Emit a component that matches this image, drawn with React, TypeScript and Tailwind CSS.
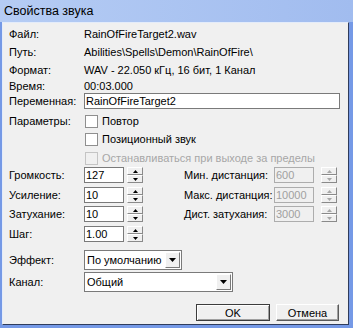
function Spin({ disabled }: { disabled?: boolean }) {
  const c = disabled ? "#a8a8a8" : "#000";
  return (
    <div className="flex flex-col w-[16px] h-[16px]">
      <div className="flex-1 flex items-center justify-center bg-[#f0f0f0] border-t border-l border-white border-r border-b border-r-[#8a8a8a] border-b-[#8a8a8a]">
        <svg width="5" height="3" viewBox="0 0 5 3">
          <path d="M2.5 0 L5 3 L0 3 Z" fill={c} />
        </svg>
      </div>
      <div className="flex-1 flex items-center justify-center bg-[#f0f0f0] border-t border-l border-white border-r border-b border-r-[#8a8a8a] border-b-[#8a8a8a]">
        <svg width="5" height="3" viewBox="0 0 5 3">
          <path d="M0 0 L5 0 L2.5 3 Z" fill={c} />
        </svg>
      </div>
    </div>
  );
}

function NumBox({ value, disabled }: { value: string; disabled?: boolean }) {
  return (
    <div
      className={
        disabled
          ? "w-[40px] h-[16px] border border-[#adadad] bg-[#f0f0f0] text-[#a0a0a0] pl-[1px] leading-[14px]"
          : "w-[40px] h-[16px] border border-[#7a7a7a] bg-white pl-[1px] leading-[14px]"
      }
    >
      {value}
    </div>
  );
}

function Check({ label, disabled }: { label: string; disabled?: boolean }) {
  return (
    <div className="flex items-center h-[13px]">
      <div
        className={
          disabled
            ? "w-[13px] h-[13px] border border-[#c4c4c4] bg-[#f0f0f0]"
            : "w-[13px] h-[13px] border border-[#8f8f8f] bg-white"
        }
      />
      <span className={disabled ? "ml-[4px] text-[#a7a7a7]" : "ml-[4px]"}>{label}</span>
    </div>
  );
}

function Combo({ value, width }: { value: string; width: string }) {
  return (
    <div className={`${width} h-[20px] border border-[#7a7a7a] bg-white flex items-center p-[1px]`}>
      <span className="flex-1 pl-[1px]">{value}</span>
      <div className="w-[15px] h-full flex items-center justify-center bg-[#f0f0f0] border-t border-l border-white border-r border-b border-r-[#7a7a7a] border-b-[#7a7a7a]">
        <svg width="7" height="4" viewBox="0 0 7 4">
          <path d="M0 0 L7 0 L3.5 4 Z" fill="#000" />
        </svg>
      </div>
    </div>
  );
}

const spinRows = [
  { label: "Громкость:", value: "127", rLabel: "Мин. дистанция:", rValue: "600" },
  { label: "Усиление:", value: "10", rLabel: "Макс. дистанция:", rValue: "10000" },
  { label: "Затухание:", value: "10", rLabel: "Дист. затухания:", rValue: "3000" },
  { label: "Шаг:", value: "1.00" },
];

export default function App() {
  return (
    <div className="w-[353px] h-[328px] bg-[#7599e6] flex flex-col font-['Liberation_Sans',Arial,sans-serif] text-[11px] text-black">
      <div className="h-[22px] flex items-center pl-[4px] text-[12.5px] bg-gradient-to-r from-[#b5ccf4] to-[#a1bcef]">
        Свойства звука
      </div>
      <div className="ml-[2px] w-[347px] h-[303px] bg-[#f0f0f0] border-t border-l border-[#e4ecfa] border-r border-b border-r-[#2f3c5c] border-b-[#2f3c5c] flex flex-col pl-[6px]">
        <div className="mt-[2px] flex items-center h-[18px]">
          <span className="w-[75px]">Файл:</span>
          <span>RainOfFireTarget2.wav</span>
        </div>
        <div className="flex items-center h-[18px]">
          <span className="w-[75px]">Путь:</span>
          <span>Abilities\Spells\Demon\RainOfFire\</span>
        </div>
        <div className="flex items-center h-[18px]">
          <span className="w-[75px]">Формат:</span>
          <span>WAV - 22.050 кГц, 16 бит, 1 Канал</span>
        </div>
        <div className="flex items-center h-[14px]">
          <span className="w-[75px]">Время:</span>
          <span>00:03.000</span>
        </div>
        <div className="flex items-center h-[16px]">
          <span className="w-[75px]">Переменная:</span>
          <div className="w-[256px] h-[16px] border border-[#7a7a7a] bg-white pl-[1px] leading-[14px]">
            RainOfFireTarget2
          </div>
        </div>
        <div className="mt-[6px] flex">
          <span className="w-[76px] leading-[13px]">Параметры:</span>
          <div className="flex flex-col">
            <Check label="Повтор" />
            <div className="mt-[5px]">
              <Check label="Позиционный звук" />
            </div>
            <div className="mt-[6px]">
              <Check label="Останавливаться при выходе за пределы" disabled />
            </div>
          </div>
        </div>
        <div className="mt-[2px] flex flex-col">
          {spinRows.map((r, i) => (
            <div
              key={r.label}
              className={`flex items-center h-[16px] ${i === 0 ? "" : i === 2 ? "mt-[3px]" : "mt-[4px]"}`}
            >
              <span className="w-[75px]">{r.label}</span>
              <NumBox value={r.value} />
              <div className="ml-[3px]">
                <Spin />
              </div>
              {r.rLabel && (
                <>
                  <span className="ml-[41px] w-[90px]">{r.rLabel}</span>
                  <NumBox value={r.rValue!} disabled />
                  <div className="ml-[7px]">
                    <Spin disabled />
                  </div>
                </>
              )}
            </div>
          ))}
        </div>
        <div className="mt-[8px] flex items-center">
          <span className="w-[75px]">Эффект:</span>
          <Combo value="По умолчанию" width="w-[98px]" />
        </div>
        <div className="mt-[2px] flex items-center">
          <span className="w-[75px]">Канал:</span>
          <Combo value="Общий" width="w-[149px]" />
        </div>
        <div className="mt-[12px] flex justify-end pr-[9px] gap-[6px]">
          <button className="w-[74px] h-[17px] bg-[#f0f0f0] border border-[#3c3c3c] shadow-[inset_1px_1px_0_#fff,inset_-1px_-1px_0_#a0a0a0] leading-[14px]">
            OK
          </button>
          <button className="w-[63px] h-[17px] bg-[#f0f0f0] border-t border-l border-white border-r border-b border-r-[#5a5a5a] border-b-[#5a5a5a] shadow-[inset_-1px_-1px_0_#a0a0a0] leading-[14px]">
            Отмена
          </button>
        </div>
      </div>
    </div>
  );
}
